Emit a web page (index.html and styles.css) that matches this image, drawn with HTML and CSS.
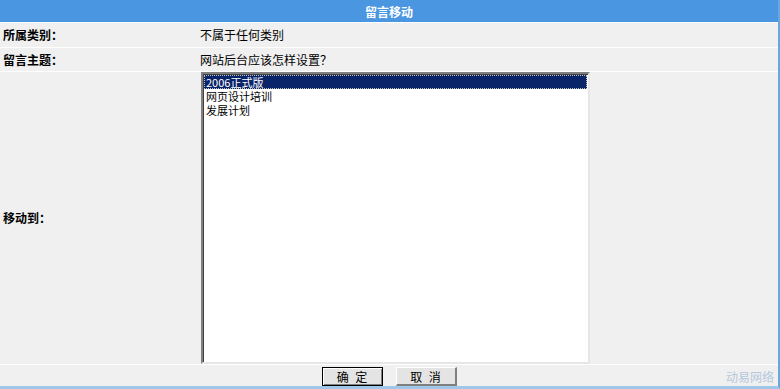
FILE: index.html
```html
<!DOCTYPE html>
<html>
<head>
<meta charset="utf-8">
<link rel="stylesheet" href="styles.css">
</head>
<body>
<div class="frame">
  <div class="head">留言移动</div>
  <div class="row r1">
    <div class="label">所属类别：</div>
    <div class="value">不属于任何类别</div>
  </div>
  <div class="row r2">
    <div class="label">留言主题：</div>
    <div class="value">网站后台应该怎样设置？</div>
  </div>
  <div class="row r3">
    <div class="label">移动到：</div>
    <div class="value">
      <div class="listbox">
        <div class="opt sel">2006正式版</div>
        <div class="opt">网页设计培训</div>
        <div class="opt">发展计划</div>
      </div>
    </div>
  </div>
  <div class="row r4">
    <button class="btn default">确 定</button>
    <button class="btn">取 消</button>
  </div>
  <div class="mark">动易网络</div>
</div>
</body>
</html>
```
FILE: styles.css
```css
html, body {
  margin: 0;
  padding: 0;
  background: #ffffff;
}
body {
  font-family: "Noto Sans CJK SC", "Liberation Sans", sans-serif;
  font-size: 12px;
  color: #000;
}
.frame {
  position: relative;
  width: 778px;
  height: 386px;
  border-right: 2px solid #6aa7dc;
  border-bottom: 3px solid #9fc8e8;
  display: flex;
  flex-direction: column;
  gap: 1px;
  background: #ffffff;
}
.head {
  height: 22px;
  background: #4a96e1;
  color: #ffffff;
  font-weight: bold;
  display: flex;
  align-items: center;
  justify-content: center;
  font-size: 12px;
}
.row {
  display: flex;
  background: #f0f0f0;
  align-items: center;
}
.r1 { height: 24px; }
.r2 { height: 23px; }
.r3 { height: 292px; }
.r4 {
  height: 21px;
  justify-content: center;
  gap: 13px;
}
.label {
  width: 197px;
  padding-left: 3px;
  font-weight: bold;
  box-sizing: border-box;
  line-height: 14px;
}
.value {
  padding-left: 3px;
  line-height: 14px;
}
.r3 .value {
  padding-left: 4px;
  align-self: stretch;
  display: flex;
  align-items: center;
}
.listbox {
  width: 383px;
  height: 286px;
  background: #ffffff;
  border-style: solid;
  border-width: 2px;
  border-color: #808080 #e6e6e6 #e6e6e6 #808080;
  box-shadow: inset 1px 1px 0 #404040;
  padding: 1px;
  box-sizing: content-box;
}
.opt {
  height: 14px;
  line-height: 14px;
  font-size: 11px;
  padding-left: 2px;
  white-space: nowrap;
  overflow: hidden;
}
.opt.sel {
  background: #0a246a;
  color: #ffffff;
  outline: 1px dotted #c0c0c0;
  outline-offset: -1px;
}
.btn {
  font-family: "Noto Sans CJK SC", "Liberation Sans", sans-serif;
  font-size: 12px;
  width: 61px;
  height: 19px;
  padding: 0;
  margin-top: 2px;
  background: #e4e4e4;
  border-style: solid;
  border-width: 1px 2px 2px 1px;
  border-color: #ffffff #808080 #808080 #ffffff;
  line-height: 15px;
  color: #000;
  word-spacing: 4px;
}
.btn.default {
  border: 1px solid #000;
  box-shadow: inset 1px 1px 0 #ffffff, inset -1px -1px 0 #808080;
}
.mark {
  position: absolute;
  right: 4px;
  bottom: 1px;
  color: #b4c8dc;
  font-size: 12px;
}
```
